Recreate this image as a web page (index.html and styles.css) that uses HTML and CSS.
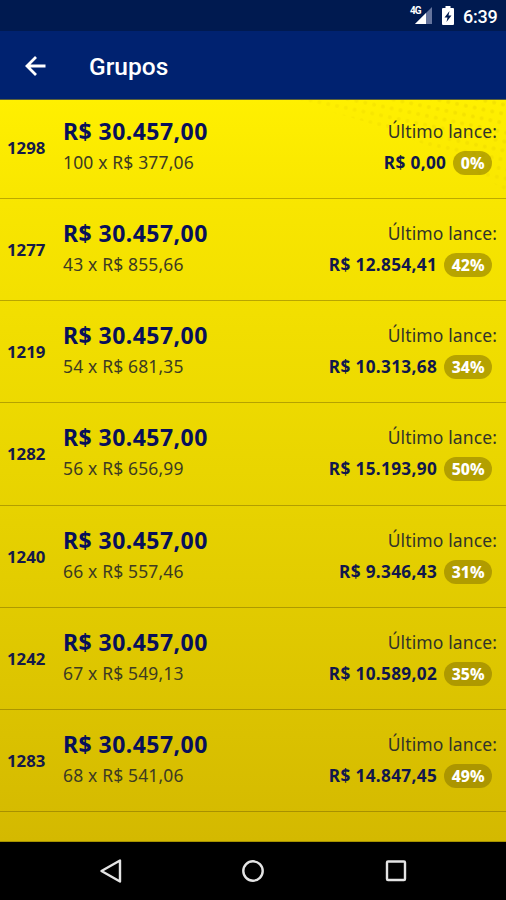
FILE: index.html
```html
<!DOCTYPE html>
<html lang="pt-BR">
<head>
<meta charset="utf-8">
<title>Grupos</title>
<link rel="stylesheet" href="styles.css">
</head>
<body>
<div class="screen">
  <div class="status">
    <svg class="signal" width="24" height="20" viewBox="0 0 24 20"><path d="M22 0V17H5Z" fill="#65749d"/><path d="M16 6V17H5Z" fill="#fff"/></svg>
    <span class="net">4G</span>
    <svg class="battery" width="12" height="19" viewBox="0 0 12 19"><path d="M3.500 0h5v2H11q1 0 1 1v15q0 1-1 1H1q-1 0-1-1V3q0-1 1-1h2.500Z" fill="#fff"/><path d="M7.500 5 2.500 11.500H5.500L4.500 16 9.500 9.500H6.500Z" fill="#001a50"/></svg>
    <span class="clock">6:39</span>
  </div>
  <header class="bar">
    <svg class="back" width="22" height="22" viewBox="0 0 22 22"><path d="M21.500 11H3M12 2 3 11 12 20" fill="none" stroke="#fff" stroke-width="2.800"/></svg>
    <h1>Grupos</h1>
  </header>
  <main class="list">
    <svg class="dots" width="226" height="92" viewBox="0 0 226 92">
      <defs>
        <pattern id="dot" width="9" height="9" patternUnits="userSpaceOnUse" patternTransform="rotate(12)"><circle cx="3" cy="3" r="2" fill="#b99a00"/></pattern>
        <linearGradient id="fade" x1="0" y1=".8" x2=".8" y2="0"><stop offset="0" stop-color="#000"/><stop offset="1" stop-color="#fff"/></linearGradient>
        <mask id="m"><path d="M0 0H226V92Q140 28 0 0Z" fill="url(#fade)"/></mask>
      </defs>
      <rect width="226" height="92" fill="url(#dot)" mask="url(#m)"/>
    </svg>
    <section class="row"><b class="id">1298</b><div class="plan"><b class="price">R$ 30.457,00</b><span class="parts">100 x R$ 377,06</span></div><div class="last"><span class="label">Último lance:</span><div class="bid"><b>R$ 0,00</b><span class="pill">0%</span></div></div></section>
    <section class="row"><b class="id">1277</b><div class="plan"><b class="price">R$ 30.457,00</b><span class="parts">43 x R$ 855,66</span></div><div class="last"><span class="label">Último lance:</span><div class="bid"><b>R$ 12.854,41</b><span class="pill">42%</span></div></div></section>
    <section class="row"><b class="id">1219</b><div class="plan"><b class="price">R$ 30.457,00</b><span class="parts">54 x R$ 681,35</span></div><div class="last"><span class="label">Último lance:</span><div class="bid"><b>R$ 10.313,68</b><span class="pill">34%</span></div></div></section>
    <section class="row"><b class="id">1282</b><div class="plan"><b class="price">R$ 30.457,00</b><span class="parts">56 x R$ 656,99</span></div><div class="last"><span class="label">Último lance:</span><div class="bid"><b>R$ 15.193,90</b><span class="pill">50%</span></div></div></section>
    <section class="row"><b class="id">1240</b><div class="plan"><b class="price">R$ 30.457,00</b><span class="parts">66 x R$ 557,46</span></div><div class="last"><span class="label">Último lance:</span><div class="bid"><b>R$ 9.346,43</b><span class="pill">31%</span></div></div></section>
    <section class="row"><b class="id">1242</b><div class="plan"><b class="price">R$ 30.457,00</b><span class="parts">67 x R$ 549,13</span></div><div class="last"><span class="label">Último lance:</span><div class="bid"><b>R$ 10.589,02</b><span class="pill">35%</span></div></div></section>
    <section class="row"><b class="id">1283</b><div class="plan"><b class="price">R$ 30.457,00</b><span class="parts">68 x R$ 541,06</span></div><div class="last"><span class="label">Último lance:</span><div class="bid"><b>R$ 14.847,45</b><span class="pill">49%</span></div></div></section>
  </main>
  <nav class="nav">
    <svg width="24" height="24" viewBox="0 0 24 24"><path d="M21 1.500V22.500L2.500 12Z"/></svg>
    <svg width="24" height="24" viewBox="0 0 24 24"><circle cx="12" cy="12" r="9.700"/></svg>
    <svg width="24" height="24" viewBox="0 0 24 24"><rect x="3" y="2.500" width="18" height="18.500" rx="1"/></svg>
  </nav>
</div>
</body>
</html>
```
FILE: styles.css
```css
* { box-sizing: border-box; }
body { margin: 0; font-family: "Noto Sans", sans-serif; }
.screen { width: 506px; height: 900px; display: flex; flex-direction: column; overflow: hidden; background: #000; }
.status { flex: none; height: 31px; padding: 0 9px 0 0; display: flex; justify-content: flex-end; align-items: center; background: #001a50; color: #fff; font-family: Roboto, sans-serif; position: relative; }
.signal { margin: 3px 8px 0 0; }
.net { position: absolute; left: 410px; top: 6px; font-size: 10px; line-height: 10px; font-weight: 700; letter-spacing: -1px; }
.battery { margin-right: 9px; }
.clock { width: 34px; font-size: 18px; line-height: 20px; font-weight: 500; letter-spacing: -.2px; margin-top: 2px; white-space: nowrap; }
.bar { flex: none; height: 69px; padding: 2px 0 0 24px; display: flex; align-items: center; gap: 43px; background: #002270; border-bottom: 1px solid #5b6038; }
.bar h1 { margin: 2px 0 0; color: #fff; font: 500 24.500px/30px Roboto, sans-serif; letter-spacing: 0; }
.list { flex: none; height: 742px; position: relative; background: linear-gradient(#fff000 0, #f9e700 12%, #e9d500 50%, #d4b900 100%); border-bottom: 1px solid #a69300; }
.dots { position: absolute; right: 0; top: 0; opacity: .15; }
.row { position: relative; height: 102.200px; padding: 19px 9px 0 7px; display: flex; border-bottom: 1px solid rgba(105, 85, 0, .42); color: #08105a; }
.row:first-of-type { height: 99px; padding-top: 15.800px; }
.id { width: 56px; padding-top: 20px; font-size: 16.800px; line-height: 24px; font-weight: 700; color: #15194a; }
.plan { flex: 1; display: flex; flex-direction: column; white-space: nowrap; }
.price { font-size: 23px; line-height: 30px; font-weight: 700; letter-spacing: .45px; }
.parts { font-size: 17.500px; line-height: 32px; letter-spacing: .15px; color: #3d3b22; }
.last { display: flex; flex-direction: column; align-items: flex-end; white-space: nowrap; }
.label { font-size: 17.500px; line-height: 30px; letter-spacing: .12px; color: #323329; }
.bid { height: 34px; display: flex; align-items: center; gap: 7px; padding-right: 5px; }
.bid b { font-size: 17.200px; line-height: 32px; font-weight: 700; letter-spacing: .35px; color: #11174c; }
.pill { height: 24px; padding: 0 7.500px; border-radius: 12px; background: rgba(140, 120, 0, .58); color: #fff; font-size: 15.800px; line-height: 24px; font-weight: 800; }
.nav { flex: 1; display: flex; justify-content: center; align-items: center; gap: 118.500px; }
.nav svg { fill: none; stroke: #e4e4e4; stroke-width: 2.400; stroke-linejoin: round; }
```
